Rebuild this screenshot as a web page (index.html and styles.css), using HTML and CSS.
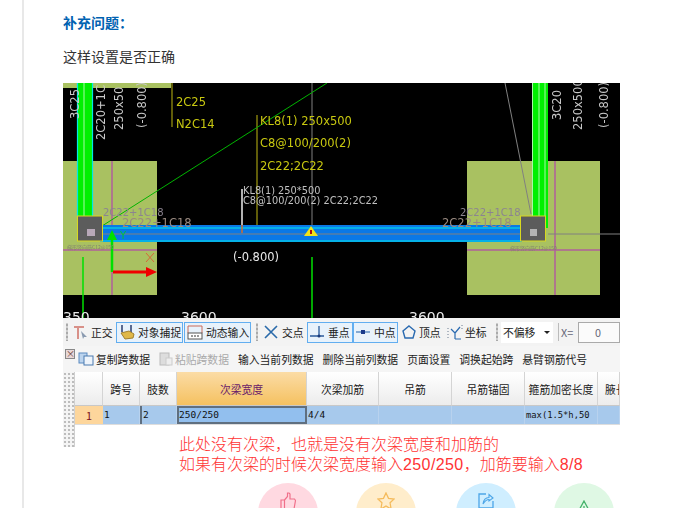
FILE: index.html
```html
<!DOCTYPE html>
<html lang="zh">
<head>
<meta charset="utf-8">
<title>补充问题</title>
<link rel="stylesheet" href="styles.css">
</head>
<body>
<main class="page">
  <h2 class="title">补充问题：</h2>
  <p class="para">这样设置是否正确</p>
  <figure class="shot">
    <svg class="cad" width="557" height="235" viewBox="63 83 557 235" xmlns="http://www.w3.org/2000/svg">
      <rect x="63" y="83" width="557" height="235" fill="#000"/>
      <rect x="63" y="83" width="108" height="5" fill="#a9c161"/>
      <rect x="63" y="161" width="94" height="134" fill="#a9c161"/>
      <rect x="467" y="161" width="133" height="134" fill="#a9c161"/>
      <path d="M112 161V295M63 250H157M555 161V295M467 250H600" class="mag"/>
      <path d="M172 83V127M257 115V228" class="olive"/>
      <path d="M312 83V232M505 83L531 214M548 234H620" class="gray"/>
      <path d="M80 240L327 83" class="thin"/>
      <path d="M83 257V318M312 257V318" class="lime"/>
      <rect x="77" y="83" width="16" height="133" fill="#00f000"/>
      <path d="M77.5 83V216M92.5 83V216" class="cy"/>
      <path d="M84 83V216" class="pale"/>
      <rect x="532" y="83" width="16" height="145" fill="#00f000"/>
      <path d="M532.5 83V216M539 83V216M545 83V216" class="pale"/>
      <rect x="100" y="225" width="422" height="17" fill="#0a78e6"/>
      <path d="M100 228H522M100 241H522" class="cy"/>
      <path d="M100 234H522" class="gray"/>
      <path d="M242 189V225" class="white"/>
      <path d="M242 225V233" class="orange"/>
      <rect x="77.5" y="216" width="25" height="25" class="box"/>
      <rect x="87" y="229" width="8" height="7" fill="#b8a8b8"/>
      <rect x="520.5" y="216" width="25" height="25" class="box"/>
      <rect x="530" y="229" width="7" height="7" fill="#b4b4b4"/>
      <path d="M311 226L318 236H304Z" fill="#f2e21a"/>
      <path d="M311 230V234" class="tick"/>
      <path d="M112 272V236" class="garrow"/>
      <path d="M112 230L117 240H107Z" fill="#00e000"/>
      <path d="M113 272H146" class="rarrow"/>
      <path d="M146 267L157 272L146 277Z" fill="#f00000"/>
      <path d="M146 253L154 262M154 253L146 262" class="rx"/>
      <text x="120" y="239" class="ygreen">Y</text>

      <text transform="translate(79 119) rotate(-90)" class="v">3C25</text>
      <text transform="translate(105 140) rotate(-90)" class="v">2C20+1C</text>
      <text transform="translate(123 130) rotate(-90)" class="v">250x50</text>
      <text transform="translate(146 128) rotate(-90)" class="v">(-0.800)</text>
      <text transform="translate(561 120) rotate(-90)" class="v">3C20</text>
      <text transform="translate(582 130) rotate(-90)" class="v">250x500</text>
      <text transform="translate(608 128) rotate(-90)" class="v">(-0.800)</text>

      <text x="176" y="106" class="y">2C25</text>
      <text x="176" y="128" class="y">N2C14</text>
      <text x="260" y="125" class="y">KL8(1) 250x500</text>
      <text x="260" y="147" class="y">C8@100/200(2)</text>
      <text x="260" y="170" class="y">2C22;2C22</text>

      <text x="243" y="194" class="note">KL8(1) 250*500</text>
      <text x="243" y="204" class="note">C8@100/200(2) 2C22;2C22</text>
      <text x="103" y="216" class="bar">2C22+1C18</text>
      <text x="122" y="227" class="bar lg">2C22+1C18</text>
      <text x="460" y="216" class="bar">2C22+1C18</text>
      <text x="442" y="227" class="bar lg">2C22+1C18</text>
      <text x="67" y="249" class="tiny">梯形竖向筋C12@150</text>
      <text x="510" y="250" class="tiny">梯形竖向筋C12@150</text>
      <text x="233" y="261" class="dim">(-0.800)</text>
      <text x="63" y="322" class="big">350</text>
      <text x="181" y="322" class="big">3600</text>
      <text x="409" y="322" class="big">3600</text>
    </svg>

    <div class="tools">
      <div class="bar1">
        <span class="grip g1"></span>
        <span class="tool t-ortho">
          <svg class="ico" width="15" height="16" viewBox="0 0 15 16"><path d="M1 2H11V4H6V15H4V4H1Z" fill="#d89088"/><path d="M8 7L14 13L11 13L10 15Z" fill="#8a9ab0"/></svg>
          正交
        </span>
        <span class="tool on t-snap">
          <svg class="ico" width="16" height="16" viewBox="0 0 16 16"><path d="M3 1V8M12 1V8" stroke="#5a6a90" stroke-width="2"/><path d="M2 9L10 7L15 10L14 14L6 15Z" fill="#e0b848" stroke="#a08030"/></svg>
          对象捕捉
        </span>
        <span class="tool on t-snap">
          <svg class="ico" width="16" height="16" viewBox="0 0 16 16"><path d="M1 2H15M1 2V9M15 2V9" stroke="#c86a5a" fill="none"/><rect x="1" y="9" width="14" height="6" fill="#fff" stroke="#555"/><path d="M4 12H12" stroke="#333" stroke-dasharray="2 1"/></svg>
          动态输入
        </span>
        <span class="grip g2"></span>
        <span class="tool t-cross">
          <svg class="ico" width="14" height="14" viewBox="0 0 14 14"><path d="M1 1L13 13M13 1L1 13" stroke="#2a6aaa" stroke-width="1.6"/></svg>
          交点
        </span>
        <span class="group">
          <span class="tool on t-foot">
            <svg class="ico" width="14" height="14" viewBox="0 0 14 14"><path d="M9 1V11M0 11H14" stroke="#2a5a9a" stroke-width="1.3"/><circle cx="9" cy="11" r="1.5" fill="#1a3a7a"/></svg>
            垂点
          </span>
          <span class="tool on t-mid">
            <svg class="ico" width="14" height="14" viewBox="0 0 14 14"><path d="M0 7H14" stroke="#5a8ac0" stroke-width="1.4"/><rect x="5" y="5" width="4" height="4" fill="#1a3a8a"/></svg>
            中点
          </span>
        </span>
        <span class="tool t-vert">
          <svg class="ico" width="14" height="14" viewBox="0 0 14 14"><path d="M7 1L13 6L11 13H3L1 6Z" fill="none" stroke="#2a6ab0" stroke-width="1.4"/></svg>
          顶点
        </span>
        <span class="tool t-coord">
          <svg class="ico" width="16" height="16" viewBox="0 0 16 16"><path d="M8 9L13 3M8 9L4 5M8 9V15M8 15H14" stroke="#2a6ab0" stroke-width="1.2" fill="none"/><path d="M1 4V14M15 1V6" stroke="#6a7a90" stroke-dasharray="1 2"/></svg>
          坐标
        </span>
        <span class="grip g3"></span>
        <span class="combo">不偏移<i class="caret"></i></span>
        <span class="sep"></span>
        <span class="xlabel">X=</span>
        <span class="xinput">0</span>
      </div>
      <div class="bar2">
        <span class="act">
          <svg class="ico" width="16" height="14" viewBox="0 0 16 14"><rect x="1" y="1" width="8" height="10" fill="#bcd4ee" stroke="#5a8ac0"/><rect x="6" y="4" width="9" height="9" fill="#eef4fb" stroke="#4a7ab0"/></svg>
          复制跨数据
        </span>
        <span class="act off">
          <svg class="ico" width="14" height="14" viewBox="0 0 14 14"><rect x="1" y="1" width="9" height="12" fill="#ddd" stroke="#bbb"/><rect x="7" y="6" width="6" height="7" fill="#eee" stroke="#ccc"/></svg>
          粘贴跨数据
        </span>
        <span class="act">输入当前列数据</span>
        <span class="act">删除当前列数据</span>
        <span class="act">页面设置</span>
        <span class="act">调换起始跨</span>
        <span class="act">悬臂钢筋代号</span>
        <span class="close">×</span>
      </div>
      <div class="sheet">
        <div class="gutter"></div>
        <div class="sheetmain">
          <div class="grid">
            <div class="hd"></div>
            <div class="hd">跨号</div>
            <div class="hd">肢数</div>
            <div class="hd sel">次梁宽度</div>
            <div class="hd">次梁加筋</div>
            <div class="hd">吊筋</div>
            <div class="hd">吊筋锚固</div>
            <div class="hd">箍筋加密长度</div>
            <div class="hd clip">腋长</div>
            <div class="rowno">1</div>
            <div class="cell">1</div>
            <div class="cell lead">2</div>
            <div class="cell cur">250/250</div>
            <div class="cell">4/4</div>
            <div class="cell"></div>
            <div class="cell"></div>
            <div class="cell small">max(1.5*h,50</div>
            <div class="cell"></div>
          </div>
          <p class="red">此处没有次梁，也就是没有次梁宽度和加筋的<br>如果有次梁的时候次梁宽度输入<span class="num">250/250</span>，加筋要输入<span class="num">8/8</span></p>
        </div>
      </div>
    </div>
  </figure>
  <div class="btns">
    <span class="circle pink"><svg width="16" height="18" viewBox="0 0 16 18"><path d="M1 8H4.5V17H1ZM4.5 8L7.5 4.5V1H9L10 2V7H14.5L15.5 8.5L14 17H4.5" fill="none" stroke="#f0708a" stroke-width="1.2"/></svg></span>
    <span class="circle amber"><svg width="18" height="18" viewBox="0 0 20 20"><path d="M10 1L12.8 7L19 7.8L14.5 12L15.7 19L10 15.6L4.3 19L5.5 12L1 7.8L7.2 7Z" fill="none" stroke="#f5bb5c" stroke-width="1.4"/></svg></span>
    <span class="circle sky"><svg width="16" height="16" viewBox="0 0 16 16"><path d="M8 1H1V15H15V8" fill="none" stroke="#4da6e8" stroke-width="1.3"/><path d="M5 11C5.500 7 8 4.500 11 4.500V1.500L15 5L11 8V6.500C8.500 6.500 6.500 8.500 5 11Z" fill="none" stroke="#4da6e8" stroke-width="1.1"/></svg></span>
    <span class="circle mint"><svg width="16" height="16" viewBox="0 0 16 16"><path d="M8 1L15 14H1Z M8 6V10 M8 11.500V12.500" fill="none" stroke="#45b26b" stroke-width="1.3"/></svg></span>
  </div>
</main>
</body>
</html>
```
FILE: styles.css
```css
html, body { margin: 0; padding: 0; height: 100%; overflow: hidden; background: #fff; }
body { font-family: "Liberation Sans", "Noto Sans CJK SC", sans-serif; }
.page { margin-left: 22px; border-left: 2px solid #e8e8e8; padding-left: 39px; min-height: 508px; box-sizing: border-box; }
.title { margin: 0; padding-top: 14px; font-size: 14px; line-height: 19px; font-weight: 700; color: #0062b1; }
.para { margin: 15px 0 0; font-size: 14px; line-height: 19px; color: #333; }
.shot { margin: 16px 0 0; width: 557px; display: flex; flex-direction: column; }

.cad { display: block; font-family: "DejaVu Sans", sans-serif; filter: blur(0.35px); }
.cad .mag { stroke: #b0609a; stroke-width: 1.5; fill: none; }
.cad .olive { stroke: #a09a10; stroke-width: 1.2; fill: none; }
.cad .gray { stroke: #808080; stroke-width: 1; fill: none; }
.cad .thin { stroke: #00b400; stroke-width: 1; fill: none; }
.cad .lime { stroke: #00e000; stroke-width: 1.5; fill: none; }
.cad .cy { stroke: #00e8e8; stroke-width: 1.2; fill: none; }
.cad .pale { stroke: #a8f8a8; stroke-width: 1; fill: none; }
.cad .white { stroke: #fff; stroke-width: 1.4; }
.cad .orange { stroke: #e06a20; stroke-width: 1.4; }
.cad .box { fill: #5c5c5c; stroke: #d8d820; stroke-width: 1; }
.cad .tick { stroke: #b01010; stroke-width: 2; }
.cad .garrow { stroke: #00e000; stroke-width: 2.5; }
.cad .rarrow { stroke: #f00000; stroke-width: 3; }
.cad .rx { stroke: #e05030; stroke-width: 0.8; }
.cad .ygreen { fill: #00c040; font-size: 10px; }
.cad .v { fill: #c8c8c8; font-size: 11.5px; }
.cad .y { fill: #c8c810; font-size: 11.5px; }
.cad .note { fill: #c0c0c0; font-size: 9.8px; }
.cad .bar { fill: #8c8490; font-size: 10px; }
.cad .bar.lg { fill: #9a8a80; font-size: 11.5px; }
.cad .tiny { fill: #808070; font-size: 5px; font-family: "Noto Sans CJK SC", sans-serif; }
.cad .dim { fill: #e8e8e8; font-size: 11.5px; }
.cad .big { fill: #e8e8e8; font-size: 14px; }

.tools { font-size: 10.8px; color: #222; font-family: "Noto Sans CJK SC", sans-serif; }
.bar1 { height: 28px; background: #f3f3f3; display: flex; align-items: center; padding-left: 3px; box-sizing: border-box; }
.grip { flex: none; width: 2px; height: 18px; background-image: radial-gradient(#aaa 0.8px, transparent 1px); background-size: 2px 4px; }
.g1 { margin-right: 4px; }
.g2 { margin: 0 5px 0 4px; }
.g3 { margin: 0 3px 0 7px; }
.tool { flex: none; display: inline-flex; align-items: center; gap: 3px; height: 21px; padding-left: 1px; box-sizing: border-box; white-space: nowrap; }
.tool.on { border: 1px solid #62aef0; background: #e8f2fb; padding-left: 2px; }
.t-ortho { width: 44px; }
.t-snap { width: 67px; margin-right: 1px; }
.t-cross { width: 41px; margin-right: 3px; gap: 4px; }
.t-foot { width: 46px; gap: 4px; }
.t-mid { width: 45px; gap: 4px; }
.t-vert { width: 41px; margin-left: 3px; gap: 3px; }
.t-coord { width: 43px; margin-left: 4px; gap: 2px; }
.group { flex: none; display: inline-flex; }
.ico { flex: none; }
.combo { flex: none; width: 52px; height: 21px; background: #fff; display: inline-flex; align-items: center; padding-left: 2px; box-sizing: border-box; position: relative; }
.caret { position: absolute; right: 3px; top: 9px; border: 3px solid transparent; border-top-color: #222; border-bottom: 0; }
.sep { flex: none; width: 1px; height: 18px; margin-left: 5px; background: #bbb; }
.xlabel { margin-left: 2px; color: #667; width: 17px; flex: none; }
.xinput { flex: 1; height: 21px; box-sizing: border-box; border: 1px solid #aaa; background: #fbfbfb; text-align: right; padding-right: 18px; line-height: 19px; color: #667; }
.bar2 { height: 26px; background: #f5f5f5; display: flex; align-items: center; gap: 9px; padding-left: 15px; box-sizing: border-box; white-space: nowrap; overflow: hidden; position: relative; }
.act { display: inline-flex; align-items: center; gap: 2px; }
.act.off { color: #aaa; }
.close { position: absolute; left: 2px; top: 3px; width: 8px; height: 8px; border: 1px solid #888; background: #e8d8d8; font-size: 9px; line-height: 8px; text-align: center; color: #633; }
.sheet { display: flex; align-items: flex-start; }
.gutter { flex: none; width: 12px; height: 75px; box-sizing: border-box; border-right: 1px solid #d0d0d0; background-color: #f4f4f4; background-image: radial-gradient(#bbb 0.7px, transparent 1px); background-size: 4px 4px; }
.sheetmain { flex: 1; min-width: 0; }
.grid { display: grid; grid-template-columns: 28px 37px 37px 130px 72px 73px 73px 73px 22px; grid-template-rows: 34px 18px; overflow: hidden; border-bottom: 1px solid #ddd; }
.hd { background: linear-gradient(#fff, #ececec); border-right: 1px solid #d4d4d4; border-bottom: 1px solid #c8c8c8; display: flex; align-items: center; justify-content: center; white-space: nowrap; overflow: hidden; box-sizing: border-box; }
.hd.sel { background: linear-gradient(#fbdca6, #f5c160); color: #6a1b6a; }
.hd.clip { justify-content: flex-start; padding-left: 7px; }
.rowno { background: #fdd69c; color: #7a1020; text-align: center; line-height: 18px; }
.cell { background: #a7c9ec; border-right: 1px solid #b8d2ee; padding-left: 1px; line-height: 18px; font-family: "DejaVu Sans Mono", monospace; font-size: 9.5px; color: #111; white-space: nowrap; overflow: hidden; box-sizing: border-box; }
.cell.lead { border-left: 2px solid #5f6f80; }
.cell.cur { background: #92bfee; border: 2px solid #5f6f80; padding-left: 0; line-height: 14px; }
.cell.small { font-size: 8.8px; }
.red { margin: 8px 0 0 104px; font-size: 16px; line-height: 20px; color: #f33; white-space: nowrap; font-weight: 300; font-family: "Noto Sans CJK SC", sans-serif; }
.num { letter-spacing: 0.4px; font-family: "Liberation Sans", sans-serif; }
.btns { margin: 8px 0 0 195px; display: flex; gap: 38px; }
.circle { width: 60px; height: 60px; border-radius: 50%; display: flex; justify-content: center; padding-top: 9px; box-sizing: border-box; flex: none; }
.pink { background: #ffd9e1; }
.amber { background: #ffedcb; }
.sky { background: #cfeeff; margin-left: 2px; padding-top: 10px; }
.mint { background: #dff8e4; padding-top: 17px; }
```
